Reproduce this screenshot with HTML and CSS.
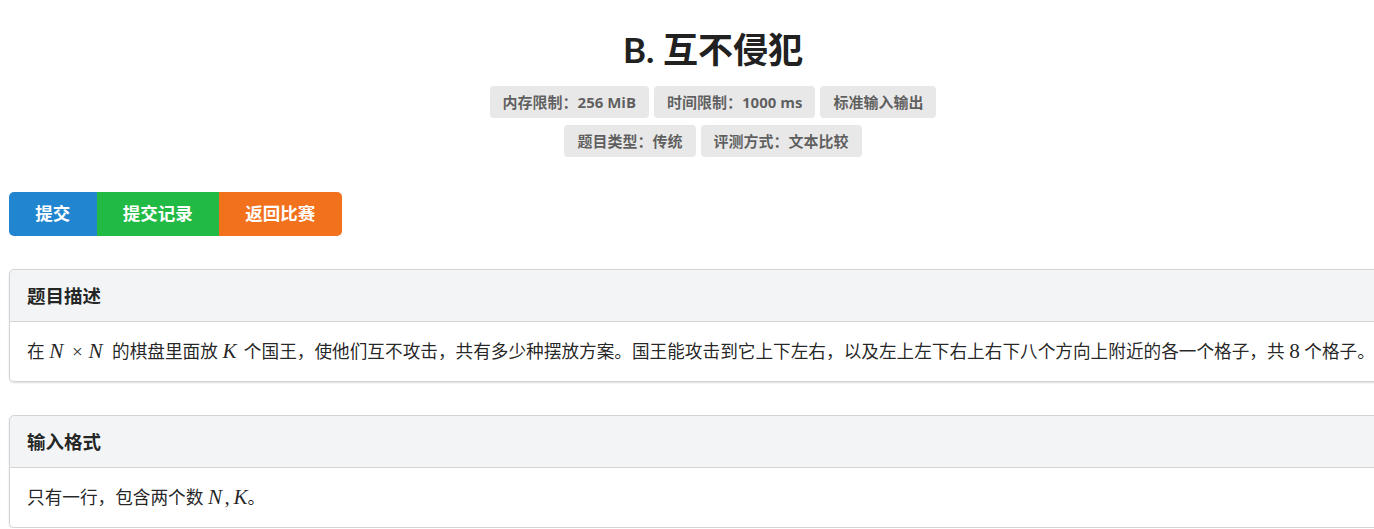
FILE: index.html
```html
<!DOCTYPE html>
<html lang="zh-CN">
<head>
<meta charset="utf-8">
<title>B. 互不侵犯</title>
<link rel="stylesheet" href="styles.css">
</head>
<body>
<div class="page">
  <div class="problem-head">
    <h1 class="title">B. 互不侵犯</h1>
    <div class="label-row">
      <span class="label">内存限制：256 MiB</span>
      <span class="label">时间限制：1000 ms</span>
      <span class="label">标准输入输出</span>
    </div>
    <div class="label-row">
      <span class="label">题目类型：传统</span>
      <span class="label">评测方式：文本比较</span>
    </div>
  </div>

  <div class="buttons">
    <a class="btn blue">提交</a>
    <a class="btn green">提交记录</a>
    <a class="btn orange">返回比赛</a>
  </div>

  <div class="card">
    <div class="card-header">题目描述</div>
    <div class="card-body">在 <span class="math"><i class="n">N</i><span class="op">×</span><i class="n">N</i></span> 的棋盘里面放 <span class="math"><i class="k">K</i></span> 个国王，使他们互不攻击，共有多少种摆放方案。国王能攻击到它上下左右，以及左上左下右上右下八个方向上附近的各一个格子，共 <span class="math"><span class="num">8</span></span> 个格子。</div>
  </div>

  <div class="card">
    <div class="card-header">输入格式</div>
    <div class="card-body">只有一行，包含两个数 <span class="math"><i>N</i><span class="comma">,</span><i>K</i></span>。</div>
  </div>
</div>
</body>
</html>
```

FILE: styles.css
```css
html {
  overflow: hidden;
}
body {
  margin: 0;
  background: #fff;
  font-family: Lato, "Noto Sans CJK SC", sans-serif;
  font-size: 17.5px;
  color: rgba(0, 0, 0, 0.87);
}
.page {
  width: 1408px;
  padding-left: 9px;
}
.problem-head {
  padding-top: 27px;
  text-align: center;
}
.title {
  margin: 0 0 15px;
  font-size: 35px;
  line-height: 44px;
  font-weight: 700;
  color: #212121;
}
.label-row {
  display: flex;
  justify-content: center;
  gap: 5px;
  margin-bottom: 7px;
}
.label {
  display: inline-block;
  background: #e8e8e8;
  color: rgba(0, 0, 0, 0.6);
  font-family: "Open Sans", "Noto Sans CJK SC", sans-serif;
  font-weight: 700;
  font-size: 15px;
  line-height: 15px;
  padding: 8.5px 13px;
  border-radius: 4px;
}
.buttons {
  display: inline-flex;
  margin-top: 28px;
}
.btn {
  display: inline-block;
  color: #fff;
  font-weight: 700;
  font-size: 17.5px;
  line-height: 18px;
  padding: 13px 26.25px;
  cursor: pointer;
}
.btn.blue { background: #2185d0; border-radius: 5px 0 0 5px; }
.btn.green { background: #21ba45; }
.btn.orange { background: #f2711c; border-radius: 0 5px 5px 0; }

.card {
  margin-top: 33px;
  border-radius: 5px;
  box-shadow: 0 1px 2px 0 rgba(34, 36, 38, 0.15);
}
.card-header {
  background: #f3f4f5;
  border: 1px solid #d4d4d5;
  border-radius: 5px 5px 0 0;
  padding: 13.5px 17px;
  font-size: 18.5px;
  line-height: 24px;
  font-weight: 700;
  color: rgba(0, 0, 0, 0.87);
}
.card-body {
  background: #fff;
  border: 1px solid #d4d4d5;
  border-top: none;
  border-radius: 0 0 5px 5px;
  padding: 17px;
  font-size: 17.65px;
  line-height: 25px;
  color: rgba(0, 0, 0, 0.87);
}
.math {
  font-family: "Liberation Serif", "DejaVu Serif", serif;
  font-size: 1.2em;
  line-height: 1;
  white-space: nowrap;
}
.math i {
  font-style: italic;
  display: inline-block;
}
.math i.n { width: 0.9em; }
.math i.k { width: 0.8em; }
.math .op {
  display: inline-block;
  font-size: 0.9em;
  margin: 0 0.3em 0 0.2em;
}
.math .comma {
  display: inline-block;
  margin-left: 0.12em;
  width: 0.42em;
}
```
